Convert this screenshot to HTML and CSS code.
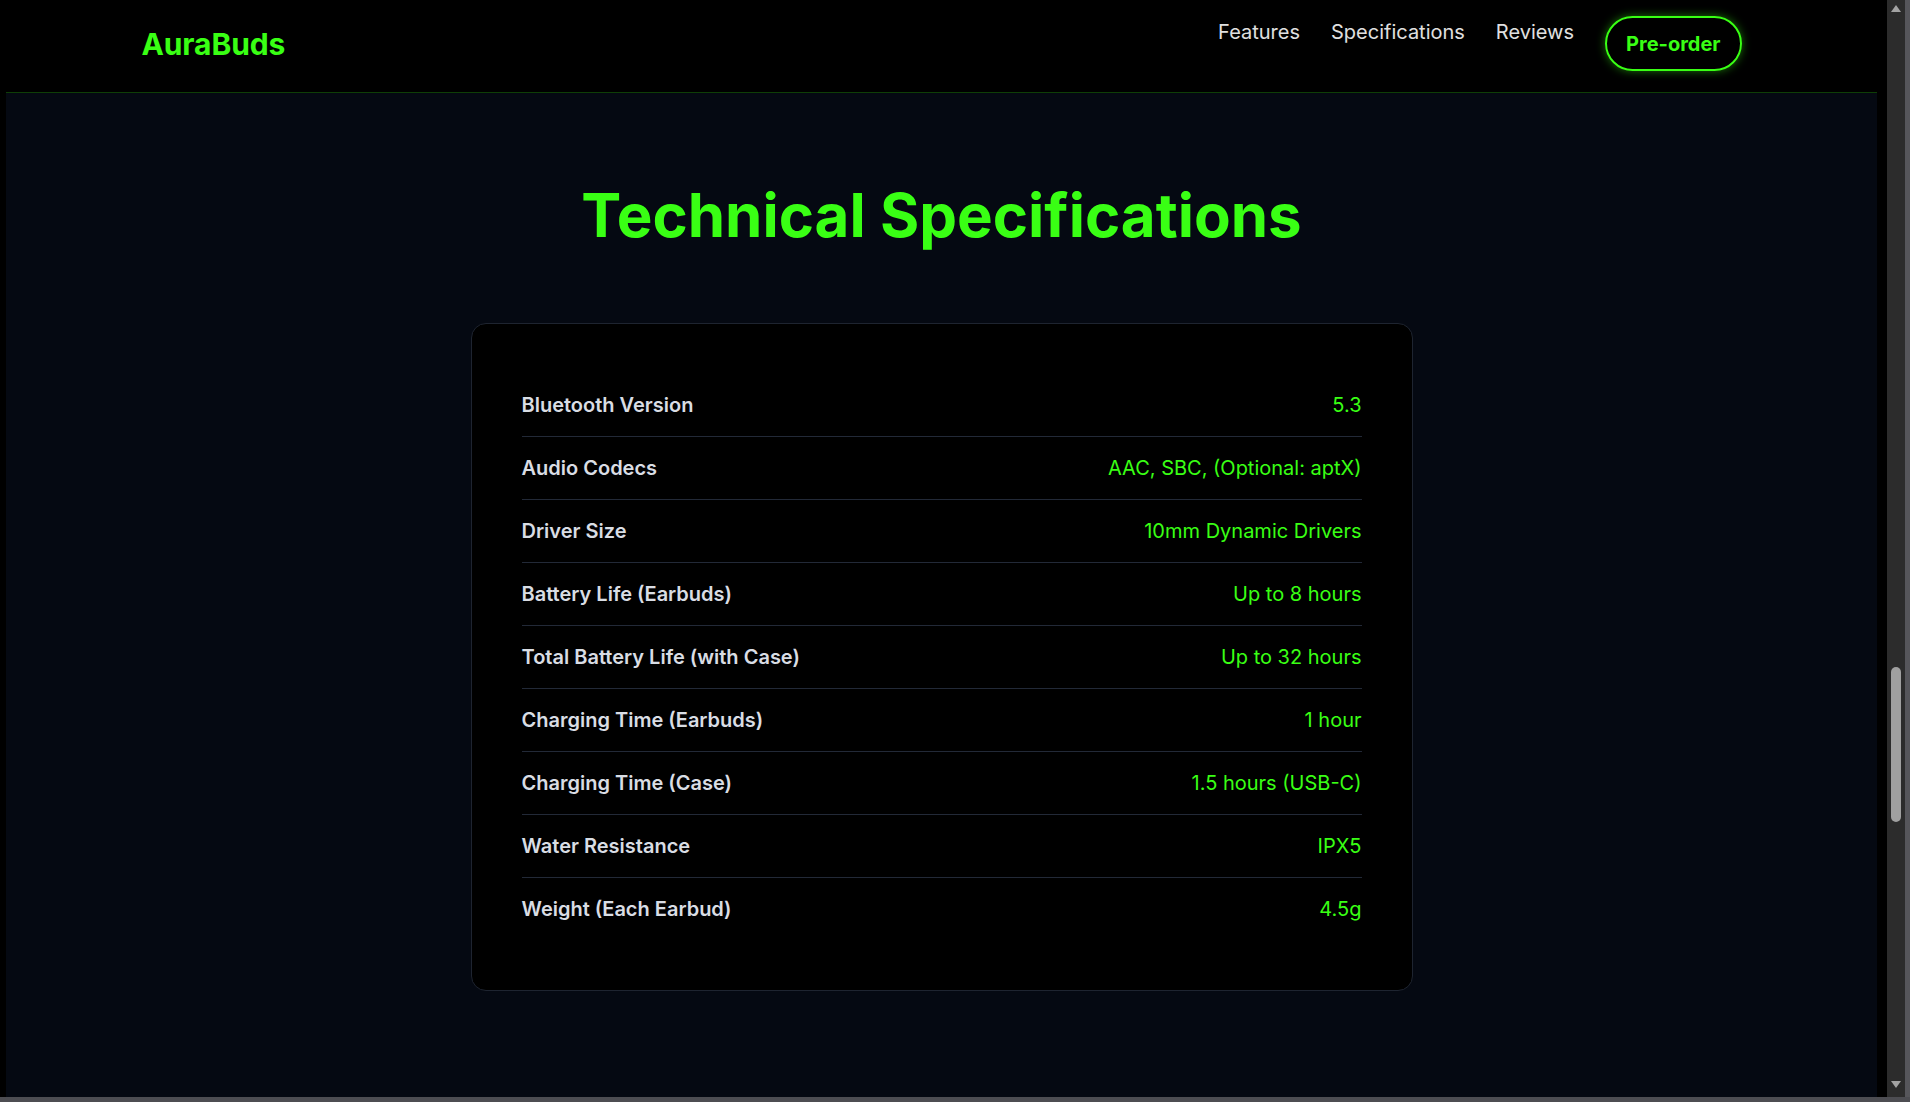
FILE: index.html
```html
<!DOCTYPE html>
<html lang="en">
<head>
<meta charset="utf-8">
<title>AuraBuds - Technical Specifications</title>
<link rel="stylesheet" href="styles.css">
</head>
<body>
<div class="window">
  <div class="viewport">
    <header class="site-header">
      <div class="header-inner">
        <a class="logo" href="#">AuraBuds</a>
        <nav class="nav">
          <ul class="nav-links">
            <li><a href="#">Features</a></li>
            <li><a href="#">Specifications</a></li>
            <li><a href="#">Reviews</a></li>
          </ul>
          <a class="btn-preorder" href="#">Pre-order</a>
        </nav>
      </div>
    </header>
    <section class="specs">
      <h2 class="specs-title">Technical Specifications</h2>
      <div class="specs-card">
        <div class="spec-row"><span class="spec-label">Bluetooth Version</span><span class="spec-value">5.3</span></div>
        <div class="spec-row"><span class="spec-label">Audio Codecs</span><span class="spec-value">AAC, SBC, (Optional: aptX)</span></div>
        <div class="spec-row"><span class="spec-label">Driver Size</span><span class="spec-value">10mm Dynamic Drivers</span></div>
        <div class="spec-row"><span class="spec-label">Battery Life (Earbuds)</span><span class="spec-value">Up to 8 hours</span></div>
        <div class="spec-row"><span class="spec-label">Total Battery Life (with Case)</span><span class="spec-value">Up to 32 hours</span></div>
        <div class="spec-row"><span class="spec-label">Charging Time (Earbuds)</span><span class="spec-value">1 hour</span></div>
        <div class="spec-row"><span class="spec-label">Charging Time (Case)</span><span class="spec-value">1.5 hours (USB-C)</span></div>
        <div class="spec-row"><span class="spec-label">Water Resistance</span><span class="spec-value">IPX5</span></div>
        <div class="spec-row"><span class="spec-label">Weight (Each Earbud)</span><span class="spec-value">4.5g</span></div>
      </div>
    </section>
  </div>
  <div class="scrollbar">
    <span class="arrow arrow-up"></span>
    <div class="track"><span class="thumb"></span></div>
    <span class="arrow arrow-down"></span>
  </div>
  <div class="frame-edge"></div>
</div>
<div class="bottom-bar"></div>
</body>
</html>
```
FILE: styles.css
```css
* { box-sizing: border-box; }

html, body {
  margin: 0;
  padding: 0;
  height: 100%;
  overflow: hidden;
  background: #000;
  font-family: Inter, "Noto Sans", "Liberation Sans", sans-serif;
}

.window {
  display: grid;
  grid-template-columns: 1887px 18px 5px;
  height: 1097px;
}

.viewport {
  padding: 0 10px 0 6px;
  background: #000;
  display: flex;
  flex-direction: column;
  overflow: hidden;
}

/* Header */
.site-header {
  background: #000;
  border-bottom: 1px solid #0f3f07;
  padding: 16px 0 21px;
  flex: none;
}

.header-inner {
  max-width: 1600px;
  margin: 0 auto;
  display: flex;
  align-items: center;
  justify-content: space-between;
}

.logo {
  color: #39ff14;
  font-size: 30px;
  font-weight: 700;
  text-decoration: none;
  letter-spacing: -0.1px;
}

.nav {
  display: flex;
  align-items: flex-start;
  gap: 31px;
}

.nav-links {
  list-style: none;
  margin: 1px 0 0;
  padding: 0;
  display: flex;
  gap: 31px;
}

.nav-links a {
  color: #e0e0e0;
  text-decoration: none;
  font-size: 20px;
  line-height: 30px;
}

.btn-preorder {
  display: block;
  color: #39ff14;
  font-weight: 700;
  font-size: 20px;
  line-height: 30px;
  padding: 11px 19px 10px;
  border: 2px solid #39ff14;
  border-radius: 30px;
  text-decoration: none;
  box-shadow: 0 0 10px rgba(57, 255, 20, 0.45);
}

/* Specs section */
.specs {
  flex: 1;
  background: #050912;
  padding: 86px 0 0;
}

.specs-title {
  margin: 0 0 72px;
  text-align: center;
  color: #39ff14;
  font-size: 60px;
  font-weight: 700;
  line-height: 72px;
}

.specs-card {
  width: 942px;
  margin: 0 auto;
  background: #000;
  border: 1px solid #1e2430;
  border-radius: 15px;
  padding: 50px 50px;
}

.spec-row {
  display: flex;
  justify-content: space-between;
  align-items: center;
  padding: 16px 0;
  line-height: 30px;
  font-size: 20px;
  border-bottom: 1px solid #222937;
}

.spec-row:last-child { border-bottom: none; }

.spec-label {
  color: #d9dde4;
  font-weight: 600;
}

.spec-value {
  color: #39ff14;
  font-weight: 400;
}

/* Fake window scrollbar */
.scrollbar {
  background: #2c2c2c;
  display: flex;
  flex-direction: column;
  align-items: center;
}

.arrow {
  width: 0;
  height: 0;
  border-left: 5px solid transparent;
  border-right: 5px solid transparent;
  flex: none;
}

.arrow-up {
  margin-top: 5px;
  border-bottom: 7px solid #a3a3a3;
}

.arrow-down {
  margin-bottom: 9px;
  border-top: 7px solid #a3a3a3;
}

.track {
  flex: 1;
  width: 100%;
  display: flex;
  justify-content: center;
  padding-top: 655px;
}

.thumb {
  display: block;
  width: 10px;
  height: 155px;
  border-radius: 5px;
  background: #a0a0a0;
}

.frame-edge {
  background: #56565b;
}

.bottom-bar {
  height: 5px;
  background: #4d4d52;
}
```
